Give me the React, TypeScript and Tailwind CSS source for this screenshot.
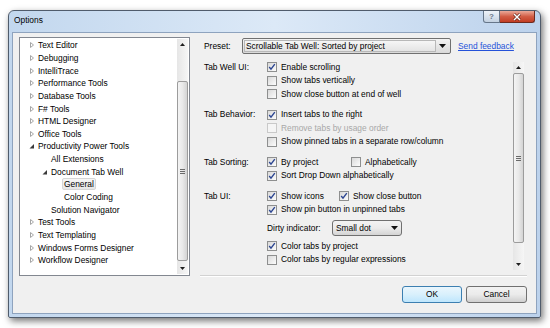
import React from "react";

type Node = {
  label: string;
  level: 0 | 1 | 2;
  arrow?: "closed" | "open";
  selected?: boolean;
};

const tree: Node[] = [
  { label: "Text Editor", level: 0, arrow: "closed" },
  { label: "Debugging", level: 0, arrow: "closed" },
  { label: "IntelliTrace", level: 0, arrow: "closed" },
  { label: "Performance Tools", level: 0, arrow: "closed" },
  { label: "Database Tools", level: 0, arrow: "closed" },
  { label: "F# Tools", level: 0, arrow: "closed" },
  { label: "HTML Designer", level: 0, arrow: "closed" },
  { label: "Office Tools", level: 0, arrow: "closed" },
  { label: "Productivity Power Tools", level: 0, arrow: "open" },
  { label: "All Extensions", level: 1 },
  { label: "Document Tab Well", level: 1, arrow: "open" },
  { label: "General", level: 2, selected: true },
  { label: "Color Coding", level: 2 },
  { label: "Solution Navigator", level: 1 },
  { label: "Test Tools", level: 0, arrow: "closed" },
  { label: "Text Templating", level: 0, arrow: "closed" },
  { label: "Windows Forms Designer", level: 0, arrow: "closed" },
  { label: "Workflow Designer", level: 0, arrow: "closed" },
];

const indent = ["pl-[8px]", "pl-[21px]", "pl-[34px]"];

function TreeArrow({ kind }: { kind?: "closed" | "open" }) {
  if (kind === "closed")
    return (
      <svg width="6" height="8" viewBox="0 0 6 8" className="ml-[1px]">
        <path d="M1.5 1.5 L4.5 4 L1.5 6.5 Z" fill="#fff" stroke="#a6a6a6" strokeWidth="1" />
      </svg>
    );
  if (kind === "open")
    return (
      <svg width="6" height="8" viewBox="0 0 6 8" className="ml-[1px]">
        <path d="M5 2 L5 6.5 L0.5 6.5 Z" fill="#3a3a3a" />
      </svg>
    );
  return null;
}

function ScrollBar({ gap, thumb }: { gap: string; thumb: string }) {
  return (
    <div className="w-[11px] flex flex-col bg-gradient-to-r from-[#e6e6e6] to-[#f6f6f6]">
      <div className="h-[11px] flex items-center justify-center">
        <svg width="5" height="3" viewBox="0 0 5 3">
          <path d="M0 3 L2.5 0 L5 3 Z" fill="#1e1e1e" />
        </svg>
      </div>
      <div className={gap} />
      <div
        className={`${thumb} rounded-[2px] border border-[#9c9c9c] bg-gradient-to-r from-[#f4f4f4] via-[#e9e9e9] to-[#d4d4d4] flex flex-col items-center justify-center gap-[1px]`}
      >
        <div className="w-[5px] h-[1px] bg-[#6a6a6a]" />
        <div className="w-[5px] h-[1px] bg-[#6a6a6a]" />
        <div className="w-[5px] h-[1px] bg-[#6a6a6a]" />
      </div>
      <div className="flex-1" />
      <div className="h-[11px] flex items-center justify-center">
        <svg width="5" height="3" viewBox="0 0 5 3">
          <path d="M0 0 L2.5 3 L5 0 Z" fill="#1e1e1e" />
        </svg>
      </div>
    </div>
  );
}

function Box({ checked, disabled }: { checked?: boolean; disabled?: boolean }) {
  return (
    <span
      className={`w-[10px] h-[10px] shrink-0 border flex items-center justify-center ${
        disabled
          ? "border-[#c9c9c9] bg-[#f5f5f5]"
          : "border-[#8e8f8f] bg-gradient-to-br from-[#d9d9d9] to-[#fcfcfc]"
      }`}
    >
      {checked && (
        <svg width="8" height="8" viewBox="0 0 8 8">
          <path d="M1.2 4 L3 6.2 L6.8 1.2" fill="none" stroke="#2b4591" strokeWidth="1.4" />
        </svg>
      )}
    </span>
  );
}

function Check({
  label,
  checked,
  disabled,
}: {
  label: string;
  checked?: boolean;
  disabled?: boolean;
}) {
  return (
    <div className={`flex items-center gap-[4px] ${disabled ? "text-[#a8a8a8]" : ""}`}>
      <Box checked={checked} disabled={disabled} />
      <span className="whitespace-nowrap">{label}</span>
    </div>
  );
}

function DownArrow() {
  return (
    <svg width="7" height="4" viewBox="0 0 7 4">
      <path d="M0 0 L7 0 L3.5 4 Z" fill="#111" />
    </svg>
  );
}

export default function App() {
  return (
    <div className="w-[550px] h-[328px] overflow-hidden bg-white font-['Liberation_Sans',Arial,sans-serif] text-[8.4px] text-black">
      <div className="ml-[8px] mt-[10px] w-[533px] h-[308px] flex flex-col rounded-t-[6px] rounded-b-[2px] border border-[#505c6c] bg-gradient-to-r from-[#c2d7ee] via-[#dce9f7] to-[#bcd2ec] px-[3px] pb-[3px] shadow-[2px_3px_7px_rgba(0,0,0,0.55)]">
        {/* title bar */}
        <div className="h-[21px] shrink-0 flex">
          <div className="pl-[2px] pt-[4px] leading-[10px]">Options</div>
          <div className="ml-auto mr-[2px] flex items-start">
            <div className="w-[17px] h-[12px] border border-t-0 border-[#66768a] rounded-bl-[3px] bg-gradient-to-b from-[#eef3f9] to-[#c3d1e1] flex items-center justify-center text-[8px] leading-none font-bold text-[#6b7889]">
              ?
            </div>
            <div className="w-[35px] h-[12px] border border-t-0 border-l-0 border-[#6e2a1e] rounded-br-[3px] bg-gradient-to-b from-[#eaa999] via-[#d25d45] to-[#c23c22] flex items-center justify-center">
              <svg width="10" height="8" viewBox="0 0 10 8">
                <path d="M2 1 L8 7 M8 1 L2 7" stroke="#5a1a10" strokeWidth="2.6" />
                <path d="M2 1 L8 7 M8 1 L2 7" stroke="#fff" strokeWidth="1.5" />
              </svg>
            </div>
          </div>
        </div>

        {/* client area */}
        <div className="flex-1 flex border border-[#8ea3be] bg-[#f0f0f0] pl-[6px] pt-[4px]">
          {/* tree */}
          <div className="w-[171px] h-[239px] flex border border-[#828790] bg-white">
            <div className="flex-1 pt-[1px]">
              {tree.map((n) => (
                <div key={n.label} className={`h-[12.65px] flex items-center ${indent[n.level]}`}>
                  <div className="w-[10px] flex items-center">
                    <TreeArrow kind={n.arrow} />
                  </div>
                  <span
                    className={`-ml-[2px] px-[1px] h-[12px] leading-[10px] border rounded-[2px] whitespace-nowrap ${
                      n.selected
                        ? "border-[#d6d6d6] bg-gradient-to-b from-[#f7f7f7] to-[#e6e6e6]"
                        : "border-transparent"
                    }`}
                  >
                    {n.label}
                  </span>
                </div>
              ))}
            </div>
            <div className="my-[1px] mr-[1px] flex">
              <ScrollBar gap="h-[31px]" thumb="h-[180px]" />
            </div>
          </div>

          {/* right side */}
          <div className="ml-[12px] w-[325px] flex flex-col">
            <div className="h-[18px] flex items-center">
              <div className="w-[40px] pl-[2px]">Preset:</div>
              <div className="w-[209px] h-[16px] flex rounded-[2px] border border-[#707070] bg-gradient-to-b from-[#f3f3f3] to-[#dadada] p-[1px]">
                <div className="flex-1 flex items-center border border-[#b8b8b8] bg-gradient-to-b from-[#f6f6f6] to-[#e4e4e4] pl-[1px] whitespace-nowrap">
                  Scrollable Tab Well: Sorted by project
                </div>
                <div className="w-[13px] flex items-center justify-center">
                  <DownArrow />
                </div>
              </div>
              <div className="ml-[7px] underline text-[#2552d9] whitespace-nowrap">Send feedback</div>
            </div>

            <div className="mt-[4px] h-[214px] flex">
              <div className="flex-1 pl-[2px] pt-[1.5px]">
                <div className="flex flex-col gap-[7px]">
                  <div>
                    <div className="h-[13.5px] flex items-center">
                      <div className="w-[63px]">Tab Well UI:</div>
                      <Check checked label="Enable scrolling" />
                    </div>
                    <div className="h-[13.5px] flex items-center pl-[63px]">
                      <Check label="Show tabs vertically" />
                    </div>
                    <div className="h-[13.5px] flex items-center pl-[63px]">
                      <Check label="Show close button at end of well" />
                    </div>
                  </div>
                  <div>
                    <div className="h-[13.5px] flex items-center">
                      <div className="w-[63px]">Tab Behavior:</div>
                      <Check checked label="Insert tabs to the right" />
                    </div>
                    <div className="h-[13.5px] flex items-center pl-[63px]">
                      <Check disabled label="Remove tabs by usage order" />
                    </div>
                    <div className="h-[13.5px] flex items-center pl-[63px]">
                      <Check label="Show pinned tabs in a separate row/column" />
                    </div>
                  </div>
                  <div>
                    <div className="h-[13.5px] flex items-center">
                      <div className="w-[63px]">Tab Sorting:</div>
                      <div className="w-[84px]">
                        <Check checked label="By project" />
                      </div>
                      <Check label="Alphabetically" />
                    </div>
                    <div className="h-[13.5px] flex items-center pl-[63px]">
                      <Check checked label="Sort Drop Down alphabetically" />
                    </div>
                  </div>
                  <div>
                    <div className="h-[13.5px] flex items-center">
                      <div className="w-[63px]">Tab UI:</div>
                      <div className="w-[72px]">
                        <Check checked label="Show icons" />
                      </div>
                      <Check checked label="Show close button" />
                    </div>
                    <div className="h-[13.5px] flex items-center pl-[63px]">
                      <Check checked label="Show pin button in unpinned tabs" />
                    </div>
                    <div className="h-[17px] my-[3px] flex items-center pl-[63px]">
                      <div className="w-[65px]">Dirty indicator:</div>
                      <div className="w-[70px] h-[16px] flex items-center rounded-[3px] border border-[#707070] bg-gradient-to-b from-[#f3f3f3] via-[#ebebeb] to-[#d4d4d4] pl-[3px]">
                        <span className="flex-1">Small dot</span>
                        <div className="w-[13px] flex items-center justify-center">
                          <DownArrow />
                        </div>
                      </div>
                    </div>
                    <div className="h-[13.5px] flex items-center pl-[63px]">
                      <Check checked label="Color tabs by project" />
                    </div>
                    <div className="h-[13.5px] flex items-center pl-[63px]">
                      <Check label="Color tabs by regular expressions" />
                    </div>
                  </div>
                </div>
              </div>
              <div className="my-[3px] mr-[3px] flex">
                <ScrollBar gap="h-0" thumb="h-[170px]" />
              </div>
            </div>

            <div className="mt-[2px] h-[2px] border-t border-[#d2d2d2] border-b border-b-white -ml-[2px]" />

            <div className="mt-[9px] flex justify-end gap-[4px]">
              <div className="w-[60px] h-[17px] flex items-center justify-center rounded-[3px] border border-[#3c7fb1] bg-gradient-to-b from-[#eaf6fd] via-[#d9f0fc] to-[#bee6fd]">
                OK
              </div>
              <div className="w-[61px] h-[17px] flex items-center justify-center rounded-[3px] border border-[#707070] bg-gradient-to-b from-[#f2f2f2] via-[#ebebeb] to-[#cfcfcf]">
                Cancel
              </div>
            </div>
          </div>
        </div>
      </div>
    </div>
  );
}
